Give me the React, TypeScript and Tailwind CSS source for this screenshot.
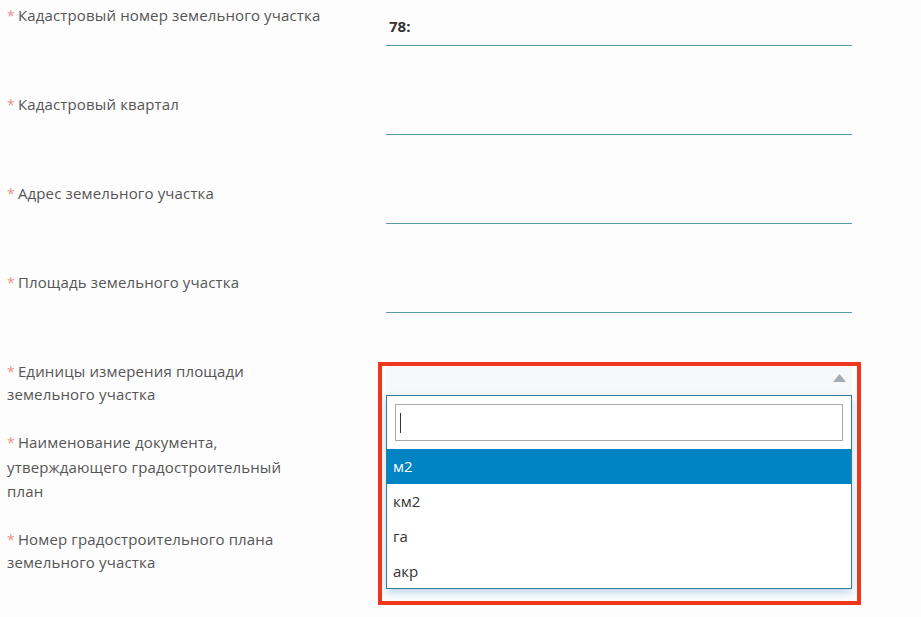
import React from "react";

function Label({ children, lh = "leading-[22px]" }: { children: React.ReactNode; lh?: string }) {
  return (
    <div className={`w-[379px] shrink-0 pt-[4px] text-[15px] tracking-[0.15px] text-[#555] ${lh}`}>
      <span className="text-[#e8908a] text-[14px] mr-[3px]">*</span>
      {children}
    </div>
  );
}

function Underline({ children }: { children?: React.ReactNode }) {
  return (
    <div className="w-[466px] mt-[8px] h-[38px] border-b border-[#5a9aa6] flex items-center pl-[3px] text-[15px] font-bold text-[#333]">
      {children}
    </div>
  );
}

export default function App() {
  return (
    <div className="w-[921px] h-[617px] bg-[#fdfdfd] overflow-hidden font-['Open_Sans',sans-serif]">
      <div className="pl-[7px]">
        <div className="flex h-[89px]">
          <Label>Кадастровый номер земельного участка</Label>
          <Underline>78:</Underline>
        </div>
        <div className="flex h-[89px]">
          <Label>Кадастровый квартал</Label>
          <Underline />
        </div>
        <div className="flex h-[89px]">
          <Label>Адрес земельного участка</Label>
          <Underline />
        </div>
        <div className="flex h-[89px]">
          <Label>Площадь земельного участка</Label>
          <Underline />
        </div>
        <div className="flex h-[70px]">
          <Label>
            Единицы измерения площади
            <br />
            земельного участка
          </Label>
          <div className="relative w-[466px] mt-[10px] h-[29px] bg-[#f7f8f9]">
            <svg className="absolute right-[6px] top-[8px]" width="13" height="8" viewBox="0 0 13 8">
              <polygon points="6.5,0 13,8 0,8" fill="#a3adb3" />
            </svg>
            <div className="absolute left-0 top-full w-[466px] h-[194px] bg-white border border-[#2e7f9c] shadow-[0_4px_8px_rgba(0,110,190,0.25)] z-10">
              <div className="pt-[8px] px-[8px] pb-[8px]">
                <div className="h-[37px] border border-[#aaa] flex items-center pl-[4px]">
                  <div className="w-[1px] h-[20px] bg-[#333]" />
                </div>
              </div>
              <div className="h-[35px] bg-[#0084c4] text-white flex items-center pl-[6px] text-[15px]">м2</div>
              <div className="h-[35px] text-[#333] flex items-center pl-[6px] text-[15px]">км2</div>
              <div className="h-[35px] text-[#333] flex items-center pl-[6px] text-[15px]">га</div>
              <div className="h-[35px] text-[#333] flex items-center pl-[6px] text-[15px]">акр</div>
            </div>
            <div className="absolute left-[-8px] top-[-4px] w-[483px] h-[243px] border-[4px] border-[#f0361c] z-20 pointer-events-none" />
          </div>
        </div>
        <div className="flex h-[98px]">
          <Label lh="leading-[24px]">
            Наименование документа,
            <br />
            утверждающего градостроительный
            <br />
            план
          </Label>
        </div>
        <div className="flex">
          <Label lh="leading-[23px]">
            Номер градостроительного плана
            <br />
            земельного участка
          </Label>
        </div>
      </div>
    </div>
  );
}
